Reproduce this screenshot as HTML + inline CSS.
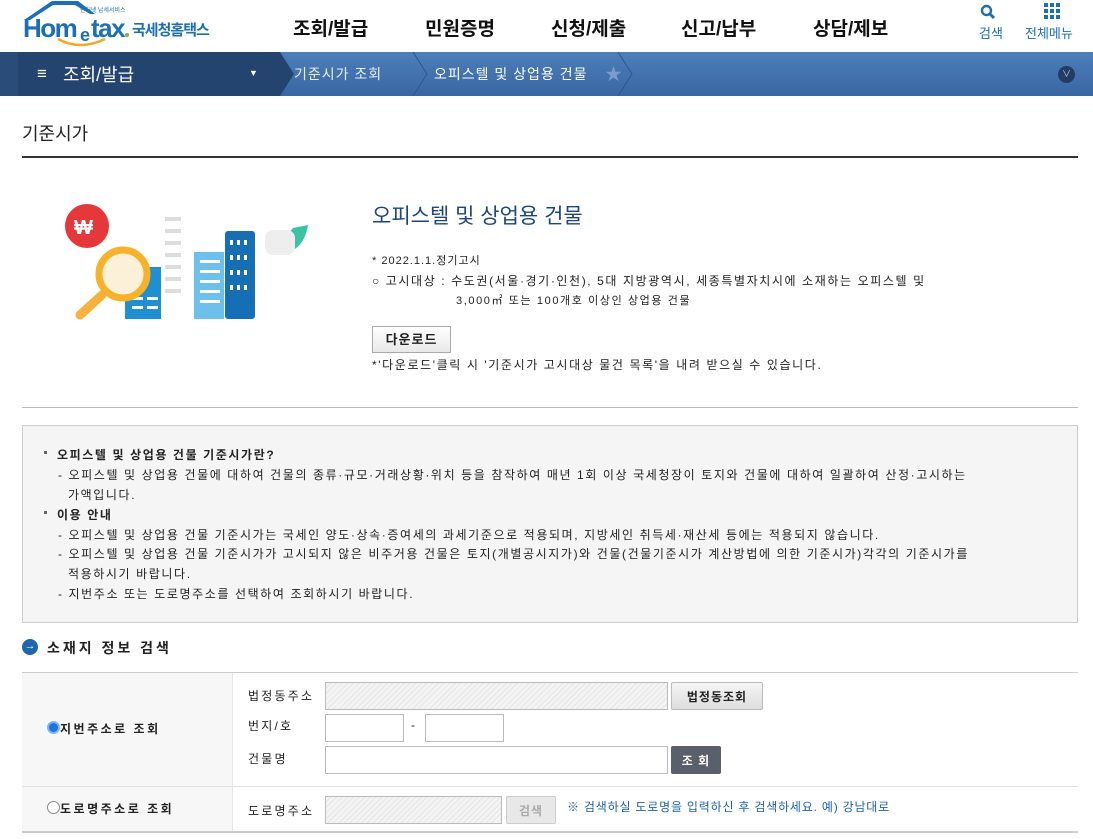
<!DOCTYPE html>
<html><head><meta charset="utf-8"><style>
*{margin:0;padding:0;box-sizing:border-box}
body{width:1093px;height:839px;overflow:hidden;background:#fff;font-family:"Liberation Sans","Noto Sans CJK KR",sans-serif;color:#222;position:relative}
.a{position:absolute;white-space:nowrap}
.nav{font-size:19px;font-weight:bold;color:#111;top:14px}
.t{font-size:12px;color:#222;letter-spacing:1.6px}
.inp{position:absolute;border:1px solid #bbb;background:#fff;height:30px}
.dis{background:repeating-linear-gradient(135deg,#f3f3f3 0 3px,#e6e6e6 3px 4px)}
.btn{position:absolute;height:28px;font-size:12px;font-weight:bold;display:flex;align-items:center;justify-content:center;border-radius:2px;letter-spacing:1px}
.lb{letter-spacing:2.5px}
</style></head><body>
<!-- logo -->
<svg class="a" style="left:20px;top:0" width="200" height="48" viewBox="0 0 200 48">
<path d="M4 20 L32 1 L58 1 L75 14 L70 14 L55 5 L33 5 L10 20 Z" fill="#1b6fb8"/>
<text x="60" y="12" font-size="6" fill="#1b6fb8" font-family="Noto Sans CJK KR">인터넷 납세서비스</text>
<text x="3" y="37" font-size="26" font-weight="bold" fill="#1b6fb8" font-family="Liberation Sans" letter-spacing="-1.5">Hom</text>
<text x="60" y="41" font-size="18" font-weight="bold" fill="#1b6fb8" font-family="Liberation Sans">e</text>
<text x="71" y="37" font-size="26" font-weight="bold" fill="#1b6fb8" font-family="Liberation Sans" letter-spacing="-1.5">tax</text>
<circle cx="107" cy="35" r="2" fill="#7cb342"/>
<path d="M38 39 Q60 51 85 39" stroke="#f5a623" stroke-width="2.5" fill="none"/>
<text x="112" y="35" font-size="15" font-weight="bold" fill="#1b6fb8" font-family="Noto Sans CJK KR" letter-spacing="-1">국세청홈택스</text>
</svg>
<div class="a nav" style="left:293px">조회/발급</div>
<div class="a nav" style="left:425px">민원증명</div>
<div class="a nav" style="left:551px">신청/제출</div>
<div class="a nav" style="left:681px">신고/납부</div>
<div class="a nav" style="left:813px">상담/제보</div>
<svg class="a" style="left:980px;top:4px" width="16" height="16" viewBox="0 0 16 16"><circle cx="6.5" cy="6.5" r="4.5" stroke="#1a6fb5" stroke-width="2.4" fill="none"/><path d="M10 10 L14 14" stroke="#1a6fb5" stroke-width="3"/></svg>
<div class="a" style="left:979px;top:23px;font-size:13px;color:#1a6fb5">검색</div>
<svg class="a" style="left:1044px;top:3px" width="16" height="16"><g fill="#1a6fb5"><rect x="0" y="0" width="4" height="4"/><rect x="6" y="0" width="4" height="4"/><rect x="12" y="0" width="4" height="4"/><rect x="0" y="6" width="4" height="4"/><rect x="6" y="6" width="4" height="4"/><rect x="12" y="6" width="4" height="4"/><rect x="0" y="12" width="4" height="4"/><rect x="6" y="12" width="4" height="4"/><rect x="12" y="12" width="4" height="4"/></g></svg>
<div class="a" style="left:1025px;top:23px;font-size:13px;color:#1a6fb5">전체메뉴</div>
<!-- bar -->
<div class="a" style="left:0;top:52px;width:1093px;height:44px;background:linear-gradient(#4d7fba,#3966a2)"></div>
<div class="a" style="left:0;top:52px;width:18px;height:44px;background:#2a4c78"></div>
<div class="a" style="left:18px;top:52px;width:202px;height:44px;background:#22446f"></div>
<svg class="a" style="left:218px;top:52px" width="420" height="44"><path d="M0 0 L62 0 L76 22 L62 44 L0 44Z" fill="#22446f"/><path d="M195 0 L209 22 L195 44" stroke="#2d5690" fill="none"/><path d="M400 0 L414 22 L400 44" stroke="#2d5690" fill="none"/></svg>
<div class="a" style="left:37px;top:64px;font-size:17px;color:#fff;font-weight:bold">≡</div>
<div class="a" style="left:63px;top:61px;font-size:18px;color:#fff">조회/발급</div>
<div class="a" style="left:249px;top:68px;font-size:9px;color:#fff">▼</div>
<div class="a" style="left:294px;top:64px;font-size:14px;color:#e8eef7;letter-spacing:1px">기준시가 조회</div>
<div class="a" style="left:434px;top:64px;font-size:14px;color:#fff;letter-spacing:1px">오피스텔 및 상업용 건물</div>
<div class="a" style="left:605px;top:60px;font-size:17px;color:#7b9ccc">★</div>
<div class="a" style="left:1058px;top:66px;width:17px;height:17px;border-radius:50%;background:#223c63;color:#ccd;font-size:9px;text-align:center;line-height:17px">∨</div>
<!-- title -->
<div class="a" style="left:22px;top:120px;font-size:18px;color:#222">기준시가</div>
<div class="a" style="left:22px;top:156px;width:1056px;height:2px;background:#333"></div>
<!-- illustration -->
<svg class="a" style="left:50px;top:200px" width="260" height="125">
<circle cx="37" cy="26" r="22" fill="#e5383b"/><text x="24" y="34" font-size="20" font-weight="bold" fill="#fff" font-family="Liberation Sans">₩</text>
<path d="M243 28 L258 25 Q255 45 240 52 Q232 40 243 28Z" fill="#3cc3a6"/>
<rect x="215" y="30" width="30" height="25" rx="8" fill="#eee"/>
<g fill="#ddd"><rect x="115" y="17" width="16" height="4"/><rect x="115" y="29" width="16" height="4"/><rect x="115" y="41" width="16" height="4"/><rect x="115" y="53" width="16" height="4"/><rect x="115" y="65" width="16" height="4"/><rect x="115" y="77" width="16" height="4"/><rect x="115" y="89" width="16" height="4"/></g>
<rect x="75" y="67" width="36" height="52" fill="#1e8fd0"/>
<rect x="144" y="52" width="30" height="67" fill="#6cc0ea"/>
<rect x="175" y="31" width="30" height="88" rx="3" fill="#166fb5"/>
<g fill="#fff"><rect x="150" y="60" width="20" height="3"/><rect x="150" y="70" width="20" height="3"/><rect x="150" y="80" width="20" height="3"/><rect x="150" y="90" width="20" height="3"/><rect x="150" y="100" width="20" height="3"/>
<rect x="180" y="40" width="3" height="5"/><rect x="187" y="40" width="3" height="5"/><rect x="194" y="40" width="3" height="5"/><rect x="180" y="55" width="3" height="5"/><rect x="187" y="55" width="3" height="5"/><rect x="194" y="55" width="3" height="5"/><rect x="180" y="70" width="3" height="5"/><rect x="187" y="70" width="3" height="5"/><rect x="194" y="70" width="3" height="5"/><rect x="180" y="85" width="3" height="5"/><rect x="187" y="85" width="3" height="5"/><rect x="194" y="85" width="3" height="5"/>
<rect x="82" y="97" width="11" height="3"/><rect x="97" y="97" width="11" height="3"/><rect x="82" y="106" width="11" height="3"/><rect x="97" y="106" width="11" height="3"/></g>
<path d="M30 115 L52 95" stroke="#f7b23b" stroke-width="9" stroke-linecap="round"/>
<circle cx="73" cy="74" r="24" fill="#fbf1d8" stroke="#f8b22a" stroke-width="7"/>
</svg>
<div class="a" style="left:372px;top:200px;font-size:21px;color:#1e467d">오피스텔 및 상업용 건물</div>
<div class="a t" style="left:372px;top:252px;font-size:11px;letter-spacing:1px">* 2022.1.1.정기고시</div>
<div class="a t" style="left:372px;top:272px">○ 고시대상 : 수도권(서울·경기·인천), 5대 지방광역시, 세종특별자치시에 소재하는 오피스텔 및</div>
<div class="a t" style="left:456px;top:292px;font-size:11px">3,000㎡ 또는 100개호 이상인 상업용 건물</div>
<div class="a" style="left:372px;top:326px;width:79px;height:27px;border:1px solid #aaa;background:linear-gradient(#fff,#e9e9e9);font-size:13px;font-weight:bold;text-align:center;line-height:25px;letter-spacing:1px">다운로드</div>
<div class="a t" style="left:372px;top:356px">*'다운로드'클릭 시 '기준시가 고시대상 물건 목록'을 내려 받으실 수 있습니다.</div>
<div class="a" style="left:22px;top:407px;width:1056px;height:1px;background:#bbb"></div>
<!-- info box -->
<div class="a" style="left:22px;top:425px;width:1056px;height:198px;background:#f5f5f5;border:1px solid #ccc"></div>
<div class="a" style="left:44px;top:451px;width:3px;height:3px;background:#666"></div>
<div class="a t" style="left:57px;top:446px;font-weight:bold">오피스텔 및 상업용 건물 기준시가란?</div>
<div class="a t" style="left:58px;top:466px">- 오피스텔 및 상업용 건물에 대하여 건물의 종류·규모·거래상황·위치 등을 참작하여 매년 1회 이상 국세청장이 토지와 건물에 대하여 일괄하여 산정·고시하는</div>
<div class="a t" style="left:68px;top:486px">가액입니다.</div>
<div class="a" style="left:44px;top:511px;width:3px;height:3px;background:#666"></div>
<div class="a t" style="left:57px;top:506px;font-weight:bold">이용 안내</div>
<div class="a t" style="left:58px;top:526px">- 오피스텔 및 상업용 건물 기준시가는 국세인 양도·상속·증여세의 과세기준으로 적용되며, 지방세인 취득세·재산세 등에는 적용되지 않습니다.</div>
<div class="a t" style="left:58px;top:545px">- 오피스텔 및 상업용 건물 기준시가가 고시되지 않은 비주거용 건물은 토지(개별공시지가)와 건물(건물기준시가 계산방법에 의한 기준시가)각각의 기준시가를</div>
<div class="a t" style="left:68px;top:565px">적용하시기 바랍니다.</div>
<div class="a t" style="left:58px;top:585px">- 지번주소 또는 도로명주소를 선택하여 조회하시기 바랍니다.</div>
<!-- search -->
<div class="a" style="left:22px;top:639px;width:16px;height:16px;border-radius:50%;background:#1d67ad;color:#fff;font-size:11px;text-align:center;line-height:15px">→</div>
<div class="a" style="left:47px;top:638px;font-size:14px;font-weight:bold;color:#222;letter-spacing:3px">소재지 정보 검색</div>
<div class="a" style="left:22px;top:672px;width:1056px;height:1px;background:#ccc"></div>
<div class="a" style="left:22px;top:673px;width:210px;height:158px;background:#f7f7f7"></div>
<div class="a" style="left:232px;top:673px;width:1px;height:158px;background:#e5e5e5"></div>
<div class="a" style="left:22px;top:786px;width:1056px;height:1px;background:#e2e2e2"></div>
<div class="a" style="left:22px;top:831px;width:1056px;height:2px;background:#ccc"></div>
<div class="a t lb" style="left:47px;top:720px;font-weight:bold"><span style="display:inline-block;width:13px;height:13px;border-radius:50%;border:2px solid #7fb4ea;background:#1a73e8;vertical-align:-1px;margin-right:0"></span>지번주소로 조회</div>
<div class="a t lb" style="left:47px;top:800px;font-weight:bold"><span style="display:inline-block;width:13px;height:13px;border-radius:50%;border:1px solid #888;background:#fff;vertical-align:-1px"></span>도로명주소로 조회</div>
<div class="a t" style="left:248px;top:687px;letter-spacing:2.2px">법정동주소</div>
<div class="a t" style="left:248px;top:717px;letter-spacing:2.2px">번지/호</div>
<div class="a t" style="left:248px;top:750px;letter-spacing:2.2px">건물명</div>
<div class="a t" style="left:248px;top:802px;letter-spacing:2.2px">도로명주소</div>
<div class="inp dis" style="left:325px;top:682px;width:343px;height:28px"></div>
<div class="btn" style="left:671px;top:682px;width:92px;border:1px solid #bbb;background:linear-gradient(#f5f5f5,#ddd)">법정동조회</div>
<div class="inp" style="left:325px;top:714px;width:79px;height:28px"></div>
<div class="a t" style="left:411px;top:718px">-</div>
<div class="inp" style="left:425px;top:714px;width:79px;height:28px"></div>
<div class="inp" style="left:325px;top:746px;width:343px;height:28px"></div>
<div class="btn" style="left:671px;top:746px;width:50px;background:#5a606b;color:#fff">조 회</div>
<div class="inp dis" style="left:325px;top:796px;width:177px;height:28px"></div>
<div class="btn" style="left:506px;top:796px;width:50px;border:1px solid #ccc;background:#e8e8e8;color:#aaa">검색</div>
<div class="a t" style="left:567px;top:798px;color:#1d63a8;letter-spacing:0.8px">※ 검색하실 도로명을 입력하신 후 검색하세요. 예) 강남대로</div>
</body></html>
